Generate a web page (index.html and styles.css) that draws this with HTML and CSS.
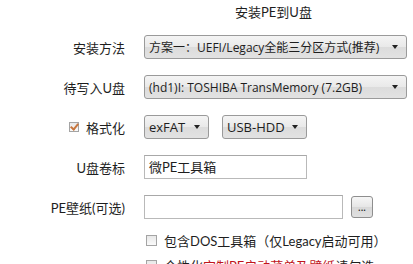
FILE: index.html
```html
<!DOCTYPE html>
<html lang="zh-CN">
<head>
<meta charset="UTF-8" />
<meta name="viewport" content="width=device-width, initial-scale=1" />
<title>安装PE到U盘</title>
<link rel="stylesheet" href="styles.css">
</head>
<body>

<div class="panel">
  <div class="title">安装PE到U盘</div>

  <div class="form">
    <label class="label">安装方法</label>
    <div class="combo wide"><span>方案一：UEFI/Legacy全能三分区方式(推荐)</span><i class="arrow"></i></div>

    <label class="label">待写入U盘</label>
    <div class="combo wide"><span>(hd1)I: TOSHIBA TransMemory (7.2GB)</span><i class="arrow"></i></div>

    <label class="label"><span class="check on"></span>格式化</label>
    <div class="pair">
      <div class="combo fs"><span>exFAT</span><i class="arrow"></i></div>
      <div class="combo mode"><span>USB-HDD</span><i class="arrow"></i></div>
    </div>

    <label class="label">U盘卷标</label>
    <div class="field name">微PE工具箱</div>

    <label class="label">PE壁纸(可选)</label>
    <div class="pair">
      <div class="field pic"></div>
      <button class="browse">...</button>
    </div>
  </div>

  <div class="options">
    <div class="opt"><span class="check"></span>包含DOS工具箱（仅Legacy启动可用）</div>
    <div class="opt"><span class="check"></span>个性化<span class="red">定制PE启动菜单及壁纸</span>请勾选</div>
  </div>
</div>

</body>
</html>
```

FILE: styles.css
```css
* {
  box-sizing: border-box;
}
html, body {
  margin: 0;
  padding: 0;
  background: #fff;
}
body {
  font-family: Lato, "Noto Sans CJK SC", sans-serif;
  font-size: 13px;
  color: #1e1e1e;
  overflow: hidden;
}
.panel {
  width: 413px;
  height: 264px;
  overflow: hidden;
}
.title {
  height: 24px;
  line-height: 24px;
  padding-left: 235px;
  margin-bottom: 11px;
}
.form {
  display: grid;
  grid-template-columns: 125px 1fr;
  grid-auto-rows: 24px;
  column-gap: 19px;
  row-gap: 16px;
}
.label {
  display: flex;
  align-items: center;
  justify-content: flex-end;
  white-space: nowrap;
}
.combo {
  display: flex;
  align-items: center;
  justify-content: space-between;
  height: 24px;
  padding: 0 8px 0 4px;
  border: 1px solid #9a9a9a;
  border-radius: 3px;
  background: linear-gradient(#f4f4f4, #e9e9e9 50%, #dcdcdc 51%, #e2e2e2);
  font-family: "Open Sans", "Noto Sans CJK SC", sans-serif;
  font-size: 12px;
  white-space: nowrap;
  overflow: hidden;
}
.combo.wide {
  width: 263px;
}
.combo.fs {
  width: 65px;
  font-size: 13px;
}
.combo.mode {
  width: 85px;
  font-size: 13px;
}
.arrow {
  width: 0;
  height: 0;
  border-left: 3.5px solid transparent;
  border-right: 3.5px solid transparent;
  border-top: 4px solid #222;
  flex-shrink: 0;
}
.pair {
  display: flex;
  align-items: center;
  gap: 13px;
}
.pair .browse {
  margin-left: -5px;
}
.field {
  height: 24px;
  line-height: 22px;
  padding: 0 4px;
  border: 1px solid #b9b9b9;
  border-top-color: #a8a8a8;
  background: #fff;
}
.field.name {
  width: 163px;
}
.field.pic {
  width: 199px;
}
.browse {
  width: 22px;
  height: 22px;
  padding: 0;
  border: 1px solid #8e8e8e;
  border-radius: 3px;
  background: linear-gradient(#f6f6f6, #e6e6e6 50%, #d8d8d8 51%, #e0e0e0);
  font-family: Lato, sans-serif;
  font-size: 11px;
  line-height: 18px;
  color: #222;
}
.check {
  display: inline-block;
  position: relative;
  width: 10px;
  height: 10px;
  border: 1px solid #a4a4a4;
  background: linear-gradient(#e8e8e8, #fafafa);
  margin-right: 7px;
  flex-shrink: 0;
}
.check.on::after {
  content: "";
  position: absolute;
  left: 2px;
  top: -1px;
  width: 3px;
  height: 6px;
  border-right: 2px solid #c8763e;
  border-bottom: 2px solid #c8763e;
  transform: rotate(40deg);
}
.options {
  margin-top: 12px;
  padding-left: 146px;
  display: flex;
  flex-direction: column;
  gap: 7px;
}
.opt {
  display: flex;
  align-items: center;
  height: 18px;
  white-space: nowrap;
}
.opt .check {
  width: 11px;
  height: 11px;
}
.red {
  color: #c0141c;
}
```
